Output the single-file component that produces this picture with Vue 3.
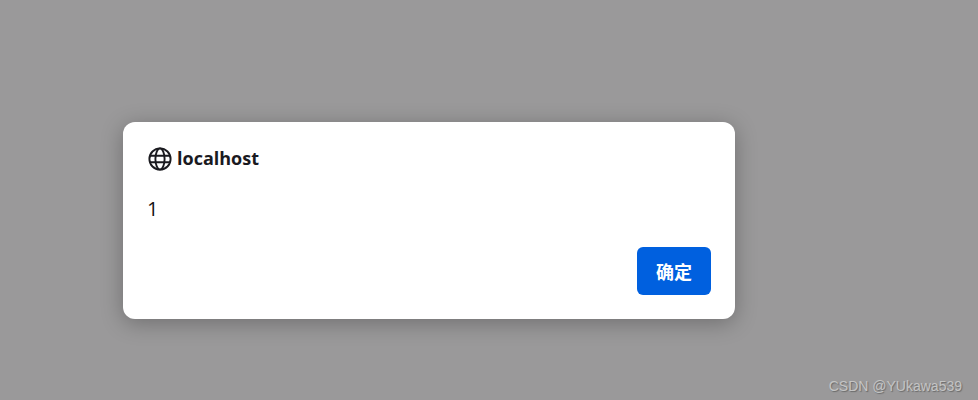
<script setup>
const host = 'localhost'
const message = '1'
</script>

<template>
  <div class="overlay">
    <div class="dialog">
      <div class="title">
        <svg class="globe" viewBox="0 0 24 24" width="24" height="24" fill="none" stroke="#1a1a1f" stroke-width="1.9">
          <circle cx="12" cy="12" r="10.6" />
          <ellipse cx="12" cy="12" rx="4.6" ry="10.6" />
          <path d="M2 8.8h20M2 15.2h20" />
        </svg>
        <span>{{ host }}</span>
      </div>
      <div class="message">{{ message }}</div>
      <div class="actions">
        <button class="btn">确定</button>
      </div>
    </div>
    <div class="watermark">CSDN @YUkawa539</div>
  </div>
</template>

<style>
html, body {
  margin: 0;
  height: 100%;
  overflow: hidden;
}
</style>

<style scoped>
.overlay {
  position: relative;
  height: 400px;
  box-sizing: border-box;
  padding: 122px 0 0 123px;
  background: #9a999a;
}

.dialog {
  width: 612px;
  height: 197px;
  box-sizing: border-box;
  padding: 24px;
  background: #fff;
  border-radius: 12px;
  box-shadow: 0 4px 22px rgba(0, 0, 0, 0.28);
  display: flex;
  flex-direction: column;
}

.title {
  display: flex;
  align-items: center;
  gap: 5px;
  height: 25px;
  padding-left: 1px;
  font-family: "Open Sans", "Noto Sans", sans-serif;
  font-size: 18px;
  font-weight: 700;
  color: #1a1a1f;
}

.title span {
  margin-top: -2px;
}

.globe {
  flex: none;
}

.message {
  margin-top: 25px;
  font-family: "Open Sans", "Noto Sans", sans-serif;
  font-size: 20px;
  line-height: 26px;
  color: #141414;
}

.actions {
  margin-top: auto;
  display: flex;
  justify-content: flex-end;
}

.btn {
  width: 74px;
  height: 48px;
  border: none;
  border-radius: 6px;
  background: #0060df;
  color: #fff;
  font-family: "Noto Sans CJK SC", sans-serif;
  font-size: 18px;
  font-weight: 700;
}

.watermark {
  position: absolute;
  right: 16px;
  bottom: 6px;
  font-family: "Liberation Sans", sans-serif;
  font-size: 14px;
  color: #c4c4c4;
  text-shadow: 1px 1px 1px #6a6a6a;
}
</style>
